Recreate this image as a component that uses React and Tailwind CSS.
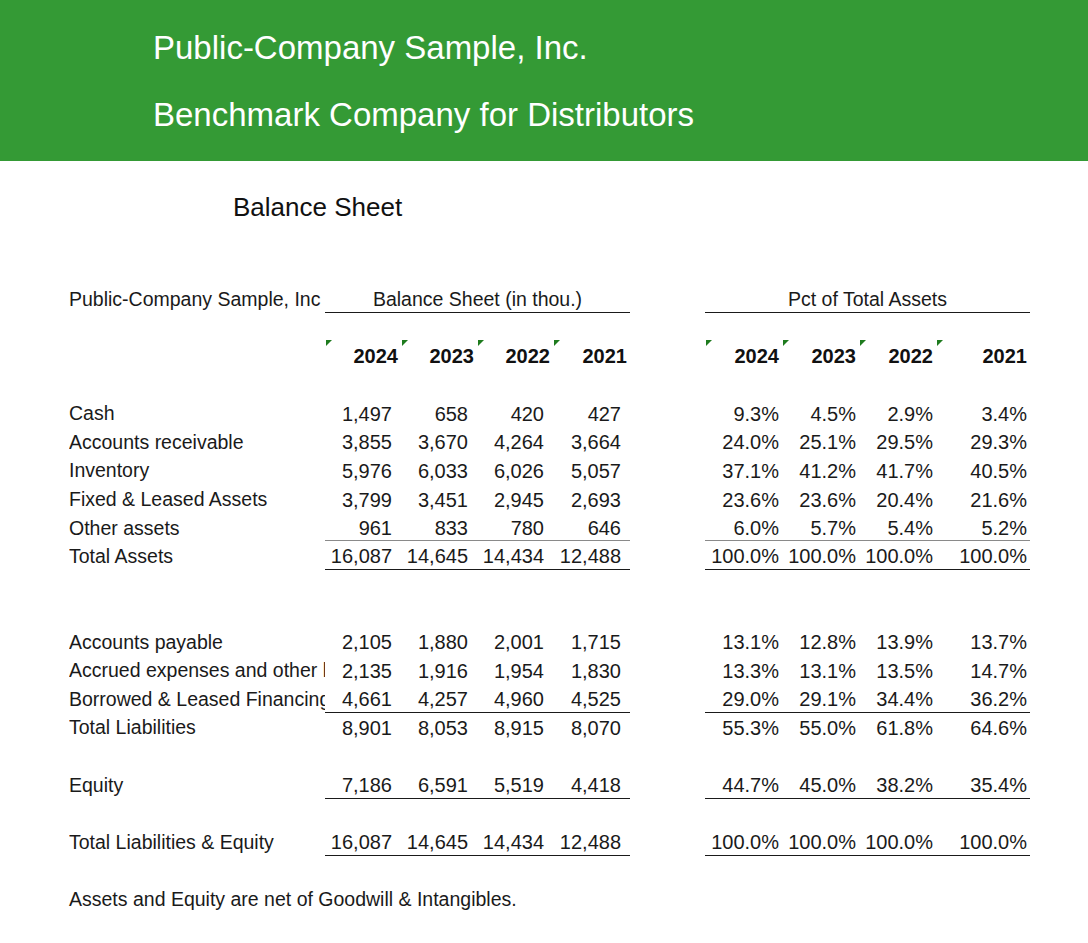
import React from 'react';

const ROW = 'h-[28.57px]';

const assets = [
    { label: 'Cash', v: ['1,497', '658', '420', '427'], p: ['9.3%', '4.5%', '2.9%', '3.4%'] },
    { label: 'Accounts receivable', v: ['3,855', '3,670', '4,264', '3,664'], p: ['24.0%', '25.1%', '29.5%', '29.3%'] },
    { label: 'Inventory', v: ['5,976', '6,033', '6,026', '5,057'], p: ['37.1%', '41.2%', '41.7%', '40.5%'] },
    { label: 'Fixed & Leased Assets', v: ['3,799', '3,451', '2,945', '2,693'], p: ['23.6%', '23.6%', '20.4%', '21.6%'] },
    { label: 'Other assets', v: ['961', '833', '780', '646'], p: ['6.0%', '5.7%', '5.4%', '5.2%'], line: 'gray' },
    { label: 'Total Assets', v: ['16,087', '14,645', '14,434', '12,488'], p: ['100.0%', '100.0%', '100.0%', '100.0%'], line: 'black' },
];

const liabilities = [
    { label: 'Accounts payable', v: ['2,105', '1,880', '2,001', '1,715'], p: ['13.1%', '12.8%', '13.9%', '13.7%'] },
    { label: 'Accrued expenses and other liabilities', v: ['2,135', '1,916', '1,954', '1,830'], p: ['13.3%', '13.1%', '13.5%', '14.7%'] },
    { label: 'Borrowed & Leased Financing', v: ['4,661', '4,257', '4,960', '4,525'], p: ['29.0%', '29.1%', '34.4%', '36.2%'], line: 'black' },
    { label: 'Total Liabilities', v: ['8,901', '8,053', '8,915', '8,070'], p: ['55.3%', '55.0%', '61.8%', '64.6%'] },
];

const leftCols = ['w-[76px]', 'w-[76px]', 'w-[76px]', 'w-[77px]'];
const rightCols = ['w-[77px]', 'w-[77px]', 'w-[77px]', 'w-[94px]'];

function lineClass(line) {
    if (line === 'gray') return 'border-b border-[#8a8a8a]';
    if (line === 'black') return 'border-b border-[#1a1a1a]';
    return '';
}

function Empty() {
    return <div className={ROW} />;
}

function DataRow({ label, v, p, line }) {
    return (
        <div className={`${ROW} flex items-center`}>
            <div className="w-[256px] pt-[2px] overflow-hidden whitespace-nowrap text-[19.5px] text-[#1a1a1a]">
                {label}
            </div>
            <div className={`w-[305px] h-full flex ${lineClass(line)}`}>
                {v.map((x, i) => (
                    <div key={i} className={`${leftCols[i]} flex items-center justify-end pt-[2px] pr-[9px] text-[20px] text-[#1a1a1a]`}>
                        {x}
                    </div>
                ))}
            </div>
            <div className="w-[75px]" />
            <div className={`w-[325px] h-full flex ${lineClass(line)}`}>
                {p.map((x, i) => (
                    <div key={i} className={`${rightCols[i]} flex items-center justify-end pt-[2px] pr-[3px] text-[20px] text-[#1a1a1a]`}>
                        {x}
                    </div>
                ))}
            </div>
        </div>
    );
}

function YearCell({ w, year }) {
    return (
        <div className={`${w} relative flex items-center justify-end pt-[1px] pr-[3px] text-[20px] font-bold text-[#111]`}>
            <span className="absolute left-[1px] top-[-2px] w-0 h-0 border-t-[6px] border-t-[#1e7b1e] border-r-[6px] border-r-transparent" />
            {year}
        </div>
    );
}

export default function App() {
    const years = ['2024', '2023', '2022', '2021'];
    return (
        <div className="w-[1088px] min-h-[943px] bg-white font-['Liberation_Sans',Arial,sans-serif]">
            {/* Green banner */}
            <div className="h-[161px] bg-[#349a35] pl-[153px] text-white text-[33px] leading-none">
                <div className="pt-[31px]">Public-Company Sample, Inc.</div>
                <div className="pt-[34px]">Benchmark Company for Distributors</div>
            </div>

            <div className="h-[123.4px] pl-[233px] pt-[33px] text-[26px] text-[#111] leading-none">
                Balance Sheet
            </div>

            <div className="pl-[69px]">
                {/* Section headers */}
                <div className={`${ROW} flex items-center`}>
                    <div className="w-[256px] pt-[2px] overflow-hidden whitespace-nowrap text-[19.5px] text-[#1a1a1a]">Public-Company Sample, Inc</div>
                    <div className="w-[305px] h-full flex items-center justify-center pt-[2px] border-b border-[#1a1a1a] text-[19.5px] text-[#1a1a1a]">
                        Balance Sheet (in thou.)
                    </div>
                    <div className="w-[75px]" />
                    <div className="w-[325px] h-full flex items-center justify-center pt-[2px] border-b border-[#1a1a1a] text-[19.5px] text-[#1a1a1a]">
                        Pct of Total Assets
                    </div>
                </div>
                <Empty />
                <div className={`${ROW} flex`}>
                    <div className="w-[256px]" />
                    <div className="w-[305px] flex">
                        {years.map((y, i) => <YearCell key={y} w={leftCols[i]} year={y} />)}
                    </div>
                    <div className="w-[75px]" />
                    <div className="w-[325px] flex">
                        {years.map((y, i) => <YearCell key={y} w={rightCols[i]} year={y} />)}
                    </div>
                </div>
                <Empty />

                {assets.map((r) => <DataRow key={r.label} {...r} />)}
                <Empty />
                <Empty />
                {liabilities.map((r) => <DataRow key={r.label} {...r} />)}
                <Empty />
                <DataRow label="Equity" v={['7,186', '6,591', '5,519', '4,418']} p={['44.7%', '45.0%', '38.2%', '35.4%']} line="black" />
                <Empty />
                <DataRow label="Total Liabilities & Equity" v={['16,087', '14,645', '14,434', '12,488']} p={['100.0%', '100.0%', '100.0%', '100.0%']} line="black" />
                <Empty />
                <div className={`${ROW} flex items-center pt-[2px] text-[19.5px] text-[#1a1a1a] whitespace-nowrap`}>
                    Assets and Equity are net of Goodwill &amp; Intangibles.
                </div>
            </div>
        </div>
    );
}
